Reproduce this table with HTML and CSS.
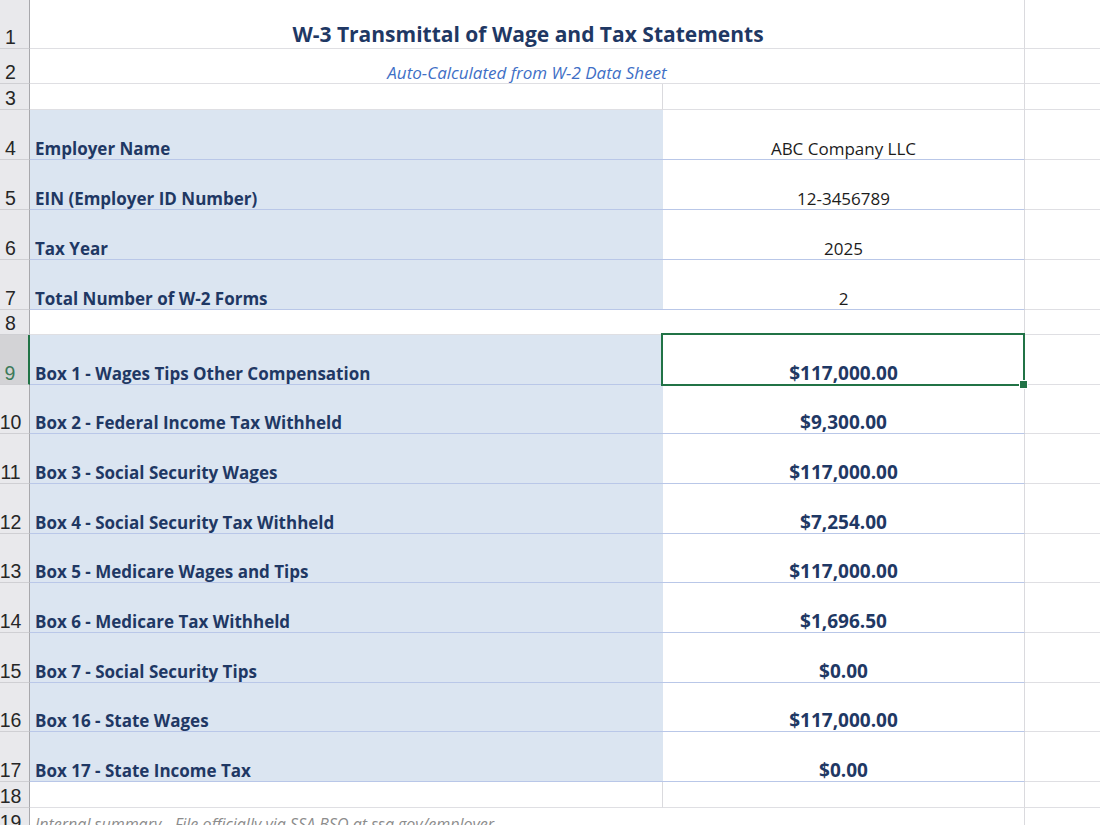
FILE: index.html
```html
<!DOCTYPE html>
<html>
<head>
<meta charset="utf-8">
<link rel="stylesheet" href="styles.css">
</head>
<body>
<div class="sheet">
  <div class="row h1">
    <div class="rh">1</div>
    <div class="c ab title">W-3 Transmittal of Wage and Tax Statements</div>
    <div class="c cc"></div>
  </div>
  <div class="row h2">
    <div class="rh">2</div>
    <div class="c ab subtitle">Auto-Calculated from W-2 Data Sheet</div>
    <div class="c cc"></div>
  </div>
  <div class="row h3">
    <div class="rh">3</div>
    <div class="c ca blank"></div>
    <div class="c cb"></div>
    <div class="c cc"></div>
  </div>
  <div class="row h4">
    <div class="rh">4</div>
    <div class="c ca lbl">Employer Name</div>
    <div class="c cb val plain">ABC Company LLC</div>
    <div class="c cc"></div>
  </div>
  <div class="row h4">
    <div class="rh">5</div>
    <div class="c ca lbl">EIN (Employer ID Number)</div>
    <div class="c cb val plain">12-3456789</div>
    <div class="c cc"></div>
  </div>
  <div class="row h4">
    <div class="rh">6</div>
    <div class="c ca lbl">Tax Year</div>
    <div class="c cb val plain">2025</div>
    <div class="c cc"></div>
  </div>
  <div class="row h4">
    <div class="rh">7</div>
    <div class="c ca lbl">Total Number of W-2 Forms</div>
    <div class="c cb val plain">2</div>
    <div class="c cc"></div>
  </div>
  <div class="row h8">
    <div class="rh">8</div>
    <div class="c ca"></div>
    <div class="c cb"></div>
    <div class="c cc"></div>
  </div>
  <div class="row h9">
    <div class="rh active">9</div>
    <div class="c ca lbl">Box 1 - Wages Tips Other Compensation</div>
    <div class="c cb val money selected">$117,000.00</div>
    <div class="c cc"></div>
  </div>
  <div class="row h9">
    <div class="rh">10</div>
    <div class="c ca lbl">Box 2 - Federal Income Tax Withheld</div>
    <div class="c cb val money">$9,300.00</div>
    <div class="c cc"></div>
  </div>
  <div class="row h9">
    <div class="rh">11</div>
    <div class="c ca lbl">Box 3 - Social Security Wages</div>
    <div class="c cb val money">$117,000.00</div>
    <div class="c cc"></div>
  </div>
  <div class="row h9">
    <div class="rh">12</div>
    <div class="c ca lbl">Box 4 - Social Security Tax Withheld</div>
    <div class="c cb val money">$7,254.00</div>
    <div class="c cc"></div>
  </div>
  <div class="row h9">
    <div class="rh">13</div>
    <div class="c ca lbl">Box 5 - Medicare Wages and Tips</div>
    <div class="c cb val money">$117,000.00</div>
    <div class="c cc"></div>
  </div>
  <div class="row h9">
    <div class="rh">14</div>
    <div class="c ca lbl">Box 6 - Medicare Tax Withheld</div>
    <div class="c cb val money">$1,696.50</div>
    <div class="c cc"></div>
  </div>
  <div class="row h9">
    <div class="rh">15</div>
    <div class="c ca lbl">Box 7 - Social Security Tips</div>
    <div class="c cb val money">$0.00</div>
    <div class="c cc"></div>
  </div>
  <div class="row h9">
    <div class="rh">16</div>
    <div class="c ca lbl">Box 16 - State Wages</div>
    <div class="c cb val money">$117,000.00</div>
    <div class="c cc"></div>
  </div>
  <div class="row h9">
    <div class="rh">17</div>
    <div class="c ca lbl">Box 17 - State Income Tax</div>
    <div class="c cb val money">$0.00</div>
    <div class="c cc"></div>
  </div>
  <div class="row h3">
    <div class="rh">18</div>
    <div class="c ca blank"></div>
    <div class="c cb"></div>
    <div class="c cc"></div>
  </div>
  <div class="row h19">
    <div class="rh">19</div>
    <div class="c ab note">Internal summary - File officially via SSA BSO at ssa.gov/employer</div>
    <div class="c cc"></div>
  </div>
</div>
</body>
</html>
```

FILE: styles.css
```css
html, body {
  margin: 0;
  padding: 0;
  background: #ffffff;
  overflow: hidden;
}

body {
  width: 1100px;
  height: 825px;
  font-family: "Open Sans", Lato, sans-serif;
}

.sheet {
  display: flex;
  flex-direction: column;
}

.row {
  display: grid;
  grid-template-columns: 30px 633px 362px 1fr;
  box-sizing: border-box;
}

.h1 { height: 49px; }
.h2 { height: 35px; }
.h3 { height: 26px; }
.h4 { height: 50px; }
.h8 { height: 25px; }
.h9 { height: 49.67px; }
.h19 { height: 26px; }

.rh {
  box-sizing: border-box;
  background: #e9e9ec;
  border-right: 1px solid #a8a8ac;
  border-bottom: 1px solid #cfcfd3;
  display: flex;
  align-items: flex-end;
  justify-content: center;
  padding-right: 8px;
  padding-bottom: 0;
  font-family: "Liberation Sans", sans-serif;
  font-size: 19.5px;
  line-height: 22px;
  color: #262626;
}

.rh.active {
  background: #d3d3d6;
  border-right: 2px solid #217346;
  color: #3d7a5a;
}

.c {
  box-sizing: border-box;
  border-bottom: 1px solid #dfdfe3;
  display: flex;
  align-items: flex-end;
  min-width: 0;
  white-space: nowrap;
  overflow: visible;
}

.ab {
  grid-column: span 2;
  justify-content: center;
  border-right: 1px solid #dadade;
}

.cb {
  border-right: 1px solid #dadade;
}

.blank {
  border-right: 1px solid #dadade;
}

.title {
  font-weight: 700;
  font-size: 21px;
  line-height: 24px;
  color: #1f3864;
  padding-bottom: 2px;
  padding-left: 2px;
}

.subtitle {
  font-style: italic;
  font-size: 17px;
  line-height: 20px;
  color: #3f6fc6;
  padding-bottom: 0;
}

.lbl {
  background: #dbe5f1;
  border-bottom: 1px solid #b9c7e8;
  padding-left: 5px;
  padding-bottom: 0;
  font-weight: 700;
  font-size: 17px;
  line-height: 20px;
  color: #1f3864;
}

.val {
  justify-content: center;
  border-bottom: 1px solid #b9c7e8;
  padding-bottom: 0;
  line-height: 20px;
}

.plain {
  font-size: 17px;
  color: #1c1c1c;
}

.money {
  font-weight: 700;
  font-size: 19px;
  line-height: 22px;
  padding-bottom: 0;
  color: #1f3864;
}

.selected {
  position: relative;
}

.selected::before {
  content: "";
  position: absolute;
  left: -2px;
  top: -2px;
  right: -1px;
  bottom: -2px;
  border: 2px solid #217346;
  pointer-events: none;
}

.selected::after {
  content: "";
  position: absolute;
  right: -4px;
  bottom: -5px;
  width: 7px;
  height: 7px;
  background: #217346;
  border: 1px solid #ffffff;
  box-sizing: content-box;
}

.note {
  justify-content: flex-start;
  padding-left: 5px;
  font-style: italic;
  font-size: 16px;
  line-height: 18px;
  color: #8c8c8c;
  align-items: flex-start;
  padding-top: 7px;
}
```
